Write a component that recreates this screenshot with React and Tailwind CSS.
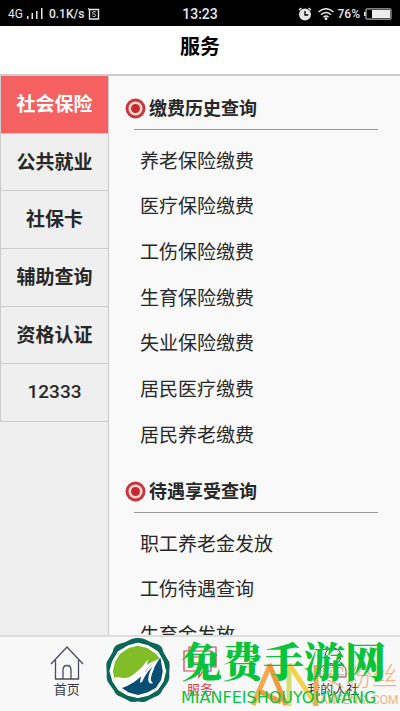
import { useState } from "react";

const categories = [
  "社会保险",
  "公共就业",
  "社保卡",
  "辅助查询",
  "资格认证",
  "12333",
];

const paymentItems = [
  "养老保险缴费",
  "医疗保险缴费",
  "工伤保险缴费",
  "生育保险缴费",
  "失业保险缴费",
  "居民医疗缴费",
  "居民养老缴费",
];

const benefitItems = ["职工养老金发放", "工伤待遇查询", "生育金发放"];

function StatusBar() {
  return (
    <div className="grid h-[26px] shrink-0 grid-cols-[1fr_auto_1fr] items-center bg-black px-2 pt-px font-['Roboto','Noto_Sans_CJK_SC',sans-serif] text-xs font-medium text-gray-200">
      <div className="flex items-center gap-1">
        <span className="font-normal">4G</span>
        <svg className="h-3 w-4" viewBox="0 0 16 12" fill="currentColor">
          <path d="M0 8h1.500v3H0zM4.500 5H6v6H4.500zM9 3h1.500v8H9zM14 0h1.500v11H14z" />
        </svg>
        <span className="ml-0.5">0.1K/s</span>
        <svg
          className="h-3 w-3"
          viewBox="0 0 12 12"
          fill="none"
          stroke="currentColor"
        >
          <path d="M1 1.5h9.5v9.5H1.5V1.5L0 .5" strokeWidth="1.4" />
          <path d="M7.8 4.2C7 3.2 4.5 3.4 4.5 4.8c0 1.6 3.2.9 3.2 2.6 0 1.4-2.6 1.5-3.4.4" />
        </svg>
      </div>
      <span className="text-sm">13:23</span>
      <div className="flex items-center justify-end">
        <svg className="mr-1.5 h-3.5 w-3.5" viewBox="0 0 14 14">
          <circle cx="7" cy="7.5" r="6" fill="#e5e5e5" />
          <path
            d="M1 3l2.4-2M13 3l-2.4-2"
            stroke="#e5e5e5"
            strokeWidth="1.5"
          />
          <path d="M7 4v4h3.2" stroke="#000" strokeWidth="1.3" fill="none" />
        </svg>
        <svg
          className="mr-1 h-3 w-4"
          viewBox="0 0 16 12"
          fill="none"
          stroke="#e5e5e5"
          strokeWidth="1.4"
        >
          <path d="M.5 4Q8-2.6 15.5 4M3 6.700Q8 2.300 13 6.700M5.400 9.200Q8 7 10.600 9.200" />
          <circle cx="8" cy="10.700" r=".7" fill="#e5e5e5" />
        </svg>
        <span>76%</span>
        <svg className="ml-1 h-3 w-7" viewBox="0 0 28 12">
          <path d="M0 4h2v4H0z" fill="#e5e5e5" />
          <rect
            x="2"
            y=".8"
            width="25"
            height="10.400"
            rx="1"
            fill="none"
            stroke="#aaa"
            strokeWidth="1.2"
          />
          <path d="M8 2h18v8H8z" fill="#ececec" />
        </svg>
      </div>
    </div>
  );
}

function TargetIcon() {
  return (
    <svg className="h-[21px] w-[21px] shrink-0" viewBox="0 0 21 21">
      <circle cx="10.500" cy="10.500" r="10" fill="#c9363f" />
      <circle cx="10.500" cy="10.500" r="7" fill="#f6dcd0" />
      <circle cx="10.500" cy="10.500" r="4.500" fill="#cc2631" />
    </svg>
  );
}

function Section({ title, items, listClass }) {
  return (
    <section>
      <div className="ml-4 flex h-[53px] items-center gap-[3px] pt-3">
        <TargetIcon />
        <h2 className="text-lg font-bold whitespace-nowrap">{title}</h2>
      </div>
      <hr className="mr-[22px] ml-[25px] border-[#999]" />
      <ul className={`mt-[9px] grid auto-rows-fr ${listClass}`}>
        {items.map((item) => (
          <li key={item} className="flex items-center pl-[31px]">
            <a href="#" className="text-[19px] whitespace-nowrap">
              {item}
            </a>
          </li>
        ))}
      </ul>
    </section>
  );
}

function HomeIcon() {
  return (
    <svg
      className="h-[34px] w-[34px]"
      viewBox="0 0 34 34"
      fill="none"
      stroke="#4b4c60"
      strokeWidth="1.3"
    >
      <path d="M1 18L17 1l16 17M5.500 14v19h23V14M13 33V24q0-4.500 4-4.500t4 4.500v9" />
    </svg>
  );
}

function ServiceIcon() {
  return (
    <svg
      className="h-[34px] w-[34px]"
      viewBox="0 0 34 34"
      fill="none"
      stroke="#c9434f"
      strokeWidth="1.200"
    >
      <path d="M6 5V1h27v20h-4M1 5h27v20h-8l-4 6v-6H1zM7 11h15M7 17h15" />
    </svg>
  );
}

function PersonIcon() {
  return (
    <svg
      className="h-[34px] w-[34px]"
      viewBox="0 0 34 34"
      fill="none"
      stroke="#4b4c60"
      strokeWidth="1"
    >
      <circle cx="17" cy="10" r="8" />
      <path d="M4 31V25q0-6 7-6h12q7 0 7 6v6z" />
    </svg>
  );
}

const tabs = [
  { label: "首页", Icon: HomeIcon },
  { label: "服务", Icon: ServiceIcon },
  { label: "我的人社", Icon: PersonIcon },
];

function BadgeLogo() {
  return (
    <svg className="h-[65px] w-[66px] shrink-0" viewBox="314 42 200 196">
      <path
        d="M396 47Q414 41 432 47L451 56L473 63Q486 68 488 84L499 103Q510 116 507 132L506 152Q509 168 498 181L485 199Q480 214 465 217L445 227Q431 237 414 231Q397 237 383 227L363 217Q348 214 343 199L330 181Q319 168 322 152L321 132Q318 116 329 103L340 84Q342 68 355 63L377 56Z"
        fill="#0c6658"
        stroke="#0c6658"
        strokeWidth="5"
        strokeLinejoin="round"
      />
      <path
        d="M414 57L384 65L354 83L337 112L329 142L338 173L355 199L383 215L414 222L445 215L473 199L490 173L498 142L490 112L474 83L445 65Z"
        fill="#fff"
        stroke="#fff"
        strokeWidth="3"
        strokeLinejoin="round"
      />
      <path
        d="M414 65L386 72L360 89L344 114L338 142L343 168Q356 186 378 175Q419 128 480 104L468 89L442 72Z"
        fill="#80bd26"
      />
      <path
        d="M482 102Q448 121 431 150Q403 181 365 193L386 207L414 214L442 207L468 193L484 169L489 142Z"
        fill="#074e75"
      />
      <path
        d="M342 164Q344 159 353 160Q371 166 388 160Q419 144 444 106Q443 123 435 145Q455 116 480 103Q463 126 456 151Q449 173 460 178Q447 184 445 168Q445 148 459 127Q439 146 427 173L420 178Q422 151 432 130Q406 165 382 178Q358 192 344 170Z"
        fill="#fff"
      />
    </svg>
  );
}

function Watermark() {
  return (
    <div
      className="pointer-events-none absolute inset-x-0 bottom-0 h-[75px] overflow-hidden"
      aria-hidden="true"
    >
      <div className="absolute top-[26px] right-0 flex items-start">
        <svg className="h-[46px] w-[70px]" viewBox="0 0 70 46" fill="none">
          <path d="M39 44V3" stroke="#d3e070" strokeWidth="5" />
          <path d="M39 2l27 41" stroke="#f3d24a" strokeWidth="5" />
          <path d="M66 44V3" stroke="#f2a855" strokeWidth="5" />
          <path d="M3 43L20 3" stroke="#f4aa50" strokeWidth="5" />
          <path d="M19 2L36 43M9 29l22 11" stroke="#f09a3c" strokeWidth="5" />
        </svg>
        <div className="w-[80px] whitespace-nowrap text-[#f2a45d] opacity-80">
          <div className="text-[26px] leading-[30px] font-light">安粉丝</div>
          <div className="text-xs">ANFENSI.COM</div>
        </div>
      </div>
      <div className="absolute top-0.5 left-[105px] flex items-start gap-[10px]">
        <BadgeLogo />
        <div className="whitespace-nowrap text-[#08c43c]">
          <div className="font-['Noto_Serif_CJK_SC','Noto_Sans_CJK_SC',serif] text-[41px] leading-[44px] font-black">
            免费手游网
          </div>
          <div className="mt-1.5 font-['DejaVu_Sans',sans-serif] text-base leading-[20px]">
            MIANFEISHOUYOUWANG
          </div>
        </div>
      </div>
    </div>
  );
}

export default function App() {
  const [category, setCategory] = useState(categories[0]);
  const [tab, setTab] = useState("服务");

  return (
    <div className="relative flex h-screen flex-col overflow-hidden bg-[#f9f9f9] font-['Roboto','Noto_Sans_CJK_SC',sans-serif] text-[#282828]">
      <StatusBar />
      <header className="flex h-[50px] shrink-0 items-center justify-center border-b-2 border-[#ccc] bg-white pb-1.5">
        <h1 className="text-xl font-bold text-black">服务</h1>
      </header>

      <div className="flex min-h-0 flex-1">
        <aside className="w-[109px] shrink-0 border-r border-[#ccc] bg-[#efefef]">
          <div className="grid h-[346px] auto-rows-fr">
            {categories.map((name) => (
              <button
                key={name}
                type="button"
                onClick={() => setCategory(name)}
                className={`w-full border-b border-l border-[#ccc] text-[19px] ${
                  category === name ? "bg-[#f56060] text-white" : ""
                } ${name === "12333" ? "font-medium" : "pt-0.5 font-bold"}`}
              >
                {name}
              </button>
            ))}
          </div>
        </aside>
        <main className="min-w-0 flex-1 overflow-hidden">
          <Section
            title="缴费历史查询"
            items={paymentItems}
            listClass="h-[320px]"
          />
          <Section
            title="待遇享受查询"
            items={benefitItems}
            listClass="h-[137px]"
          />
        </main>
      </div>

      <nav className="grid h-[76px] shrink-0 grid-cols-3 border-t-2 border-[#ddd] bg-[#f8f8f8]">
        {tabs.map(({ label, Icon }) => (
          <button
            key={label}
            type="button"
            onClick={() => setTab(label)}
            className={`flex flex-col items-center gap-px pt-[9px] text-[13px] leading-[18px] ${
              tab === label ? "text-[#d9434a]" : "text-[#38384a]"
            }`}
          >
            <Icon />
            {label}
          </button>
        ))}
      </nav>
      <Watermark />
    </div>
  );
}
